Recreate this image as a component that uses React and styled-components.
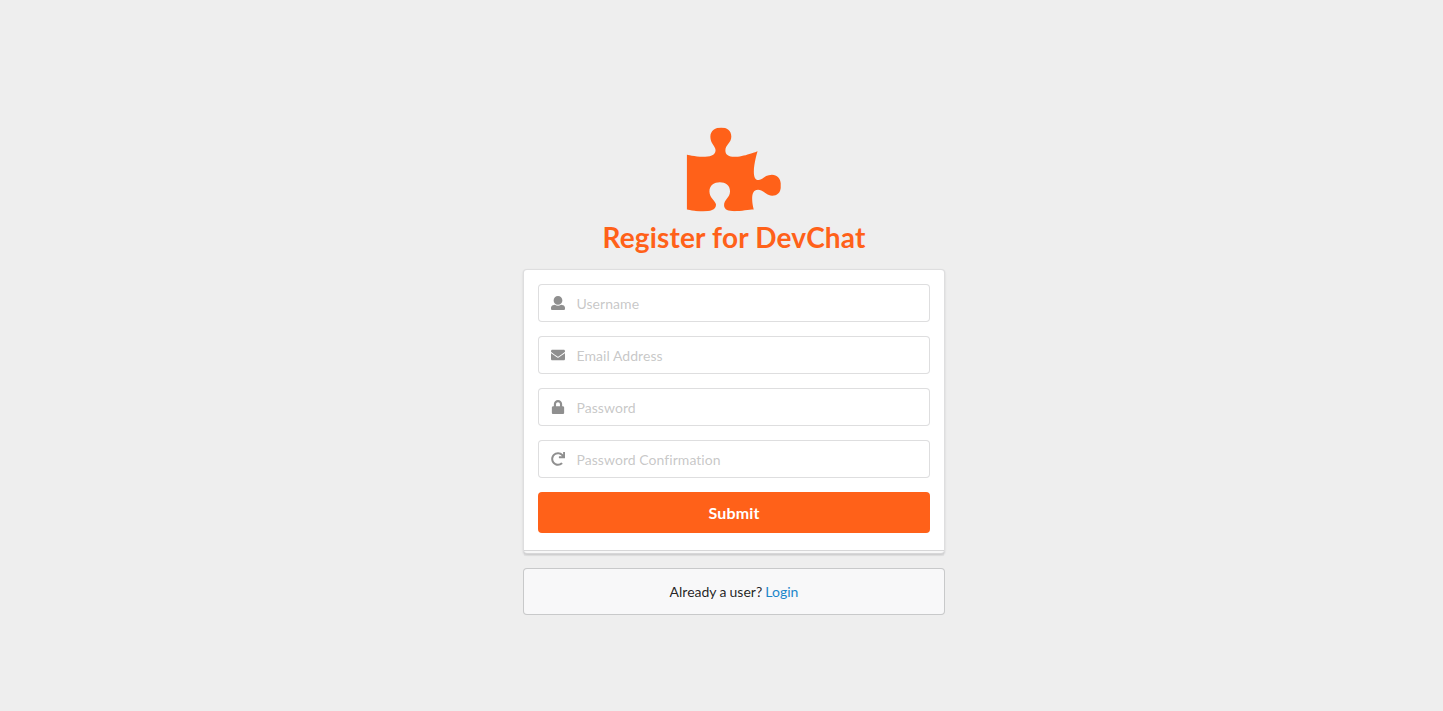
import React from "react";
import styled, { createGlobalStyle } from "styled-components";
import { FaPuzzlePiece, FaEnvelope, FaLock, FaRedo } from "react-icons/fa";

const GlobalStyle = createGlobalStyle`
  *, *::before, *::after { box-sizing: border-box; }
  html { font-size: 14px; }
  body {
    margin: 0;
    background: #eee;
    font-family: Lato, "Liberation Sans", Arial, sans-serif;
    font-size: 14px;
    line-height: 1.4285em;
    color: rgba(0, 0, 0, 0.87);
  }
`;

const Page = styled.main`
  min-height: 100vh;
  display: flex;
  justify-content: center;
  align-items: flex-start;
  padding: 127px 0 0 25px;
`;

const Column = styled.div`
  width: 422px;
  text-align: center;
`;

const Header = styled.h1`
  margin: 0 0 14px;
  display: flex;
  flex-direction: column;
  align-items: center;
  color: #ff6119;
  font-size: 28px;
  font-weight: 700;
  line-height: 36px;
  letter-spacing: 0.17px;
`;

const Logo = styled(FaPuzzlePiece)`
  display: block;
  width: 94.5px;
  height: 84px;
  margin-bottom: 8px;
  transform: translate(-0.3px, 0.5px);
`;

const Form = styled.form`
  position: relative;
  display: flex;
  flex-direction: column;
  gap: 14px;
  height: 285px;
  padding: 14px;
  background: #fff;
  border: 1px solid rgba(34, 36, 38, 0.15);
  border-radius: 4px;
  box-shadow: 0 1px 2px 0 rgba(34, 36, 38, 0.15);

  &::after {
    content: "";
    position: absolute;
    left: 0;
    bottom: -3px;
    width: 100%;
    height: 6px;
    border-top: 1px solid rgba(34, 36, 38, 0.15);
    background: rgba(0, 0, 0, 0.03);
  }
`;

const Field = styled.label`
  display: flex;
  align-items: center;
  height: 38px;
  padding-left: 12px;
  border: 1px solid rgba(34, 36, 38, 0.15);
  border-radius: 4px;
  background: #fff;
`;

const FieldIcon = styled.span`
  display: flex;
  justify-content: center;
  width: 14px;
  margin: 0 11.5px 0 0;
  color: rgba(0, 0, 0, 0.87);
  opacity: 0.5;

  svg { display: block; height: 14px; width: auto; }
`;

const Input = styled.input`
  flex: 1;
  min-width: 0;
  padding: 0;
  border: 0;
  outline: 0;
  background: transparent;
  font: inherit;
  line-height: 17px;
  letter-spacing: 0.05px;
  color: rgba(0, 0, 0, 0.87);

  &::placeholder { color: rgba(191, 191, 191, 0.87); }
`;

const Submit = styled.button`
  height: 41px;
  padding: 1px 0 0;
  border: 0;
  border-radius: 4px;
  background: #ff6119;
  color: #fff;
  font: 700 16px/16px Lato, "Liberation Sans", sans-serif;
  letter-spacing: 0.16px;
  cursor: pointer;
`;

const Message = styled.div`
  height: 47px;
  margin-top: 14px;
  padding: 14px 21px;
  border-radius: 4px;
  background: #f8f8f9;
  box-shadow: 0 0 0 1px rgba(34, 36, 38, 0.22) inset;
  word-spacing: -0.4px;
`;

const Link = styled.a`
  color: #1e87ca;
  text-decoration: none;
`;

const UserIcon = () => (
  <svg viewBox="0 0 512 512" width="14" height="14" fill="currentColor" aria-hidden="true">
    <path d="M256 0c88.366 0 160 71.634 160 160s-71.634 160-160 160S96 248.366 96 160 167.634 0 256 0zm183.283 333.821l-71.313-17.828c-74.923 53.89-165.738 41.864-223.94 0l-71.313 17.828C29.981 344.505 0 382.903 0 426.955V464c0 26.51 21.49 48 48 48h416c26.51 0 48-21.49 48-48v-37.045c0-44.052-29.981-82.45-72.717-93.134z" />
  </svg>
);

const fields = [
  { name: "username", type: "text", label: "Username", Icon: UserIcon },
  { name: "email", type: "email", label: "Email Address", Icon: FaEnvelope },
  { name: "password", type: "password", label: "Password", Icon: FaLock },
  { name: "confirmation", type: "password", label: "Password Confirmation", Icon: FaRedo },
];

export default function App() {
  return (
    <>
      <GlobalStyle />
      <Page>
        <Column>
          <Header>
            <Logo />
            Register for DevChat
          </Header>
          <Form onSubmit={(e) => e.preventDefault()}>
            {fields.map(({ name, type, label, Icon }) => (
              <Field key={name}>
                <FieldIcon><Icon /></FieldIcon>
                <Input name={name} type={type} placeholder={label} />
              </Field>
            ))}
            <Submit type="submit">Submit</Submit>
          </Form>
          <Message>
            Already a user? <Link href="#login">Login</Link>
          </Message>
        </Column>
      </Page>
    </>
  );
}
